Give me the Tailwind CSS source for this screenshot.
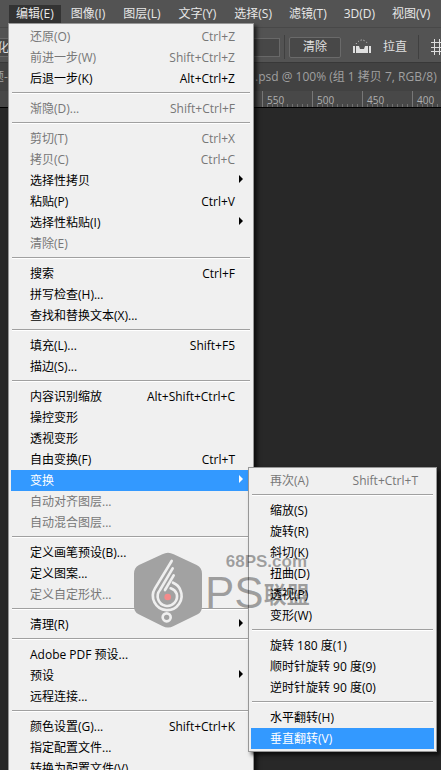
<!DOCTYPE html>
<html lang="zh-CN">
<head>
<meta charset="utf-8">
<title>编辑菜单</title>
<script src="https://cdn.jsdelivr.net/npm/@tailwindcss/browser@4"></script>
</head>
<body class="relative h-screen overflow-hidden bg-[#282828] font-['Open_Sans','Noto_Sans_CJK_SC',sans-serif] text-xs text-black">
<svg class="hidden"><symbol id="arrow" viewBox="0 0 4 8"><path d="M0 0l4 4-4 4z" fill="currentColor"/></symbol></svg>
<header class="whitespace-nowrap">
  <nav class="flex h-7 items-center border-b border-[#484848] bg-[#535353] pl-[9px] text-[#e8e8e8]">
    <button class="mt-px h-[18px] bg-[#333] px-[7px] leading-[18px]">编辑(E)</button>
    <button class="pl-[10px]">图像(I)</button>
    <button class="pl-[18px]">图层(L)</button>
    <button class="pl-[18px]">文字(Y)</button>
    <button class="pl-[18px]">选择(S)</button>
    <button class="pl-[17px]">滤镜(T)</button>
    <button class="pl-[17px]">3D(D)</button>
    <button class="pl-[17px]">视图(V)</button>
  </nav>
  <div class="flex h-[35px] items-center overflow-hidden border-b border-[#383838] bg-[#535353] pt-1 text-[#e0e0e0]">
    <input aria-label="选项" class="-ml-2 h-[19px] w-[288px] shrink-0 border border-[#686868] bg-[#474747] px-1" value="化的">
    <i class="ml-1 h-6 w-px shrink-0 bg-[#404040]"></i>
    <button class="ml-1 h-[21px] w-[52px] shrink-0 rounded-xs border border-[#6a6a6a] bg-[#484848] leading-4">清除</button>
    <svg class="ml-3 h-4 w-[18px] shrink-0" viewBox="0 0 18 16" fill="#e0e0e0"><path d="M0 7h2v7H0zM3 7h3l1 3h4l1-3h3v7H3zM16 7h2v7h-2z"/><path d="M3 5Q9-3 15 5" fill="none" stroke="#ddd" stroke-dasharray="1 2"/></svg>
    <span class="ml-3 shrink-0">拉直</span>
    <i class="ml-[11px] h-6 w-px shrink-0 bg-[#404040]"></i>
    <svg class="ml-3 h-4 w-4 shrink-0" viewBox="0 0 16 16" fill="none" stroke="#ddd"><path d="M0 3.500h16M0 8.500h16M0 12.500h16M3.500 0v16M8.500 0v16M13.500 0v16"/></svg>
  </div>
  <div class="flex h-7 items-center bg-[#424242] text-[#a0a0a0]"><span class="-ml-2 w-[263px] shrink-0">题-</span><span>.psd @ 100% (组 1 拷贝 7, RGB/8)</span></div>
  <div class="relative flex h-[17px] border-b border-black bg-[#484848] pl-[262px] text-[10px] leading-[18px] text-[#b0b0b0] *:w-[50px] *:shrink-0 *:border-l *:border-[#777] *:bg-[repeating-linear-gradient(90deg,transparent_0_4px,#707070_4px_5px)] *:bg-[length:100%_3px] *:bg-bottom *:bg-no-repeat *:pl-1">
    <span>550</span><span>500</span><span>450</span><span>400</span>
  </div>
</header>

<div role="menu" aria-label="编辑" class="absolute left-2 top-[23px] flex w-[246px] flex-col border border-[#979797] bg-[#f0f0f0] px-0.5 py-0.5 shadow-[3px_3px_4px_#000a] [&>button]:flex [&>button]:h-[21px] [&>button]:shrink-0 [&>button]:items-center [&>button]:justify-between [&>button]:pl-[19px] [&>button]:pr-4 [&>button:disabled]:text-[#777] [&>hr]:mx-px [&>hr]:mt-[3px] [&>hr]:mb-[5px] [&>hr]:border-[#a0a0a0] [&>hr]:shadow-[0_1px_0_#fff] [&_svg]:-mr-2 [&_svg]:mb-1 [&_svg]:h-2 [&_svg]:w-1 whitespace-nowrap">
  <button disabled>还原(O)<kbd class="font-[inherit]">Ctrl+Z</kbd></button>
  <button disabled>前进一步(W)<kbd class="font-[inherit]">Shift+Ctrl+Z</kbd></button>
  <button>后退一步(K)<kbd class="font-[inherit]">Alt+Ctrl+Z</kbd></button>
  <hr>
  <button disabled>渐隐(D)...<kbd class="font-[inherit]">Shift+Ctrl+F</kbd></button>
  <hr>
  <button disabled>剪切(T)<kbd class="font-[inherit]">Ctrl+X</kbd></button>
  <button disabled>拷贝(C)<kbd class="font-[inherit]">Ctrl+C</kbd></button>
  <button>选择性拷贝<svg><use href="#arrow"/></svg></button>
  <button>粘贴(P)<kbd class="font-[inherit]">Ctrl+V</kbd></button>
  <button>选择性粘贴(I)<svg><use href="#arrow"/></svg></button>
  <button disabled>清除(E)</button>
  <hr>
  <button>搜索<kbd class="font-[inherit]">Ctrl+F</kbd></button>
  <button>拼写检查(H)...</button>
  <button>查找和替换文本(X)...</button>
  <hr>
  <button>填充(L)...<kbd class="font-[inherit]">Shift+F5</kbd></button>
  <button>描边(S)...</button>
  <hr>
  <button>内容识别缩放<kbd class="font-[inherit]">Alt+Shift+Ctrl+C</kbd></button>
  <button>操控变形</button>
  <button>透视变形</button>
  <button>自由变换(F)<kbd class="font-[inherit]">Ctrl+T</kbd></button>
  <button class="bg-[#3399ff] text-white">变换<svg><use href="#arrow"/></svg></button>
  <button disabled>自动对齐图层...</button>
  <button disabled>自动混合图层...</button>
  <hr>
  <button>定义画笔预设(B)...</button>
  <button>定义图案...</button>
  <button disabled>定义自定形状...</button>
  <hr>
  <button>清理(R)<svg><use href="#arrow"/></svg></button>
  <hr>
  <button>Adobe PDF 预设...</button>
  <button>预设<svg><use href="#arrow"/></svg></button>
  <button>远程连接...</button>
  <hr>
  <button>颜色设置(G)...<kbd class="font-[inherit]">Shift+Ctrl+K</kbd></button>
  <button>指定配置文件...</button>
  <button>转换为配置文件(V)...</button>
</div>

<div role="menu" aria-label="变换" class="absolute left-[248px] top-[467px] flex w-[189px] flex-col border border-[#979797] bg-[#f0f0f0] p-0.5 shadow-[3px_3px_4px_#000a] [&>button]:flex [&>button]:h-[21px] [&>button]:shrink-0 [&>button]:items-center [&>button]:justify-between [&>button]:pl-[19px] [&>button]:pr-4 [&>button:disabled]:text-[#777] [&>hr]:mx-px [&>hr]:mt-[3px] [&>hr]:mb-[5px] [&>hr]:border-[#a0a0a0] [&>hr]:shadow-[0_1px_0_#fff] whitespace-nowrap">
  <button disabled>再次(A)<kbd class="font-[inherit]">Shift+Ctrl+T</kbd></button>
  <hr>
  <button>缩放(S)</button>
  <button>旋转(R)</button>
  <button>斜切(K)</button>
  <button>扭曲(D)</button>
  <button>透视(P)</button>
  <button>变形(W)</button>
  <hr>
  <button>旋转 180 度(1)</button>
  <button>顺时针旋转 90 度(9)</button>
  <button>逆时针旋转 90 度(0)</button>
  <hr>
  <button>水平翻转(H)</button>
  <button class="bg-[#3399ff] text-white">垂直翻转(V)</button>
</div>

<div class="pointer-events-none absolute left-[133px] top-[552px] flex whitespace-nowrap text-black/35">
  <svg class="h-[77px] w-[70px]" viewBox="40 36 210 231" fill="none" stroke="#efefef" stroke-width="8" stroke-linecap="round">
    <path d="M128 43Q145 34 162 43L231 75Q247 83 247 101V200Q247 215 234 223L162 258Q145 267 128 258L57 223Q43 215 43 200V101Q43 83 58 75Z" fill="#a2a2a2" stroke="none"/>
    <path d="M156 63L106 145A43 43 0 1 0 182 150Q177 135 160 128"/>
    <path d="M159 85L121 150A29 29 0 1 0 171 161Q166 149 153 145"/>
    <path d="M162 106L136 150"/>
    <circle cx="144" cy="171" r="10" fill="#f58a8a" stroke="none"/>
    <circle cx="141" cy="232" r="12"/>
  </svg>
  <div class="w-[104px] shrink-0 pl-0.5">
    <div class="text-right font-['Liberation_Sans'] text-[17px] leading-5 font-bold">68PS.com</div>
    <div class="flex items-center"><span class="font-['Liberation_Sans'] text-[44px] leading-[42px]">PS</span><span class="font-['Noto_Sans_CJK_SC'] text-[23px] leading-[42px] font-bold">联盟</span></div>
  </div>
</div>
</body>
</html>
